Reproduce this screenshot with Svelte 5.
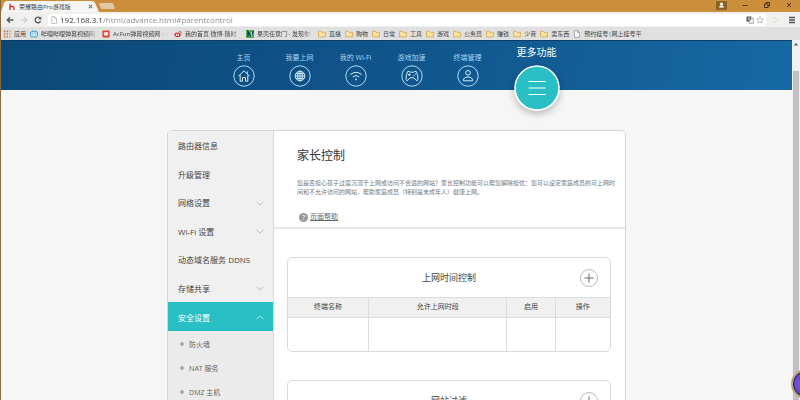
<script>
let address = $state("192.168.3.1/html/advance.html#parentcontrol");
let current = $state("安全设置");

const sites = [
    { icon: "bili", label: "哔哩哔哩弹幕视频网" },
    { icon: "acfun", label: "AcFun弹幕视频网 -" },
    { icon: "weibo", label: "我的首页 微博-随时" },
    { icon: "guokr", label: "果壳任意门 - 发现你" },
];

const folders = ["直播", "购物", "日常", "工具", "游戏", "公务员", "赚钱", "少音", "卖东西"];

const tabs = [
    { icon: "home", label: "主页" },
    { icon: "globe", label: "我要上网" },
    { icon: "wifi", label: "我的 Wi-Fi" },
    { icon: "game", label: "游戏加速" },
    { icon: "user", label: "终端管理" },
];

const menu = [
    { label: "路由器信息" },
    { label: "升级管理" },
    { label: "网络设置", more: true },
    { label: "Wi-Fi 设置", more: true },
    { label: "动态域名服务 DDNS" },
    { label: "存储共享", more: true },
    { label: "安全设置", more: true, children: ["防火墙", "NAT 服务", "DMZ 主机"] },
];

const tables = [
    { title: "上网时间控制", columns: ["终端名称", "允许上网时段", "启用", "操作"] },
    { title: "网站过滤", columns: ["终端名称", "禁止访问网站", "启用", "操作"] },
];
</script>

<div class="browser">
    <header class="titlebar">
        <div class="tab">
            <svg class="tab__shape" viewBox="0 0 100 11" preserveAspectRatio="none" aria-hidden="true">
                <path d="M0 11 L3 2 Q4 0 6 0 H92 Q94 0 95 2 L99 11 Z" fill="#f6f5f3" />
            </svg>
            <svg class="tab__logo" viewBox="0 0 8 8" aria-hidden="true">
                <path d="M2 .8V7M2 4.5Q2 3.4 4 3.4T6 4.5V7" fill="none" stroke="#d2232a" stroke-width="1.3" />
            </svg>
            <span class="tab__title">荣耀路由Pro游戏版</span>
            <button class="plain" aria-label="关闭标签页">
                <svg viewBox="0 0 6 6" class="tab__close"><path d="M1.5 1.5l3 3M4.5 1.5l-3 3" stroke="#666" stroke-width=".9" /></svg>
            </button>
        </div>
        <button class="newtab" aria-label="新标签页"></button>
        <div class="controls">
            <button class="plain profile" aria-label="用户">
                <svg viewBox="0 0 11 9"><circle cx="5.5" cy="3" r="1.5" fill="#fff" /><path d="M3 6.5Q3 4.6 5.5 4.6T8 6.5Z" fill="#fff" /></svg>
            </button>
            <button class="plain" aria-label="最小化">
                <svg viewBox="0 0 8 8"><path d="M1.5 4.5h5" stroke="#54370d" /></svg>
            </button>
            <button class="plain" aria-label="还原">
                <svg viewBox="0 0 8 8"><path d="M3 3V1.5h3.5V5H5M1.5 3H5v3.5H1.5Z" fill="none" stroke="#4a2f0a" /></svg>
            </button>
            <button class="plain" aria-label="关闭">
                <svg viewBox="0 0 8 8"><path d="M2 2l4 4M6 2l-4 4" stroke="#54370d" /></svg>
            </button>
        </div>
    </header>

    <div class="toolbar">
        <button class="plain" aria-label="后退">
            <svg viewBox="0 0 8 8"><path d="M7.5 4H1.5M4 1.2L1.2 4 4 6.8" fill="none" stroke="#555" stroke-width="1.3" /></svg>
        </button>
        <button class="plain" aria-label="前进">
            <svg viewBox="0 0 8 8"><path d="M.5 4h6M4 1.2L6.8 4 4 6.8" fill="none" stroke="#ccc" stroke-width="1.2" /></svg>
        </button>
        <button class="plain" aria-label="刷新">
            <svg viewBox="0 0 8 8"><path d="M6.6 5A2.8 2.8 0 1 1 6 2" fill="none" stroke="#555" stroke-width="1.3" /><path d="M7.4.4v3.2H4.2Z" fill="#555" /></svg>
        </button>
        <div class="address">
            <svg viewBox="0 0 8 8" aria-hidden="true"><path d="M1.8.6h3l1.7 1.7v5.1H1.8ZM4.8.6v1.7h1.7" fill="none" stroke="#aaa" stroke-width=".7" /></svg>
            <input type="text" aria-label="地址" bind:value={address}>
            <button class="plain" aria-label="翻译">
                <svg viewBox="0 0 8 8"><rect x=".5" y=".5" width="4.8" height="5.2" fill="#555" /><path d="M1.6 2h2.6M2.9 1.2V2M2 4.6Q3.6 3.7 3.8 2M2 2.8L4 4.6" fill="none" stroke="#fff" stroke-width=".5" /><path d="M5.6 2.2h2v5.2H3.2V6" fill="#eee" stroke="#888" stroke-width=".6" /></svg>
            </button>
            <button class="plain" aria-label="收藏">
                <svg viewBox="0 0 8 8"><path d="M4 .6l1 2.3 2.5.2-1.9 1.6.6 2.5L4 5.9 1.8 7.2l.6-2.5L.5 3.1 3 2.9Z" fill="none" stroke="#999" stroke-width=".6" /></svg>
            </button>
        </div>
        <button class="plain" aria-label="扩展">
            <svg viewBox="0 0 8 8"><path d="M2 1l4 3-4 3Z" fill="none" stroke="#ddd" stroke-width=".8" /></svg>
        </button>
        <button class="plain menu-button" aria-label="菜单">
            <svg viewBox="0 0 8 8"><path d="M1 1.5h6M1 4h6M1 6.5h6" stroke="#555" stroke-width="1.3" /></svg>
        </button>
    </div>

    <nav class="bookmarks" aria-label="书签">
        <a href="#apps">
            <svg viewBox="0 0 8 8" aria-hidden="true">
                <path d="M1.6 .6v6.8" stroke="#d9604f" stroke-width="1.4" stroke-dasharray="1.6 1" />
                <path d="M4.2 .6v6.8" stroke="#6aa66a" stroke-width="1.4" stroke-dasharray="1.6 1" />
                <path d="M6.8 .6v6.8" stroke="#d9a24f" stroke-width="1.4" stroke-dasharray="1.6 1" />
            </svg>
            <span>应用</span>
        </a>
        {#each sites as site}
            <a href="#{site.icon}" class="site">
                <svg viewBox="0 0 8 8" aria-hidden="true">
                    {#if site.icon === "bili"}
                        <path d="M2 .3l1.4 1.3M6 .3L4.6 1.6" stroke="#3a9fd6" stroke-width=".8" />
                        <rect x=".6" y="1.7" width="6.8" height="5.2" rx="1" fill="#cfeaf8" stroke="#3a9fd6" />
                        <path d="M2.6 3.4v1.2M5.4 3.4v1.2" stroke="#3a9fd6" stroke-width=".8" />
                    {:else if site.icon === "acfun"}
                        <rect x=".4" y=".4" width="7.2" height="7.2" rx=".8" fill="#d8452c" />
                        <path d="M2.2 2.4h3.6v2.8H2.2ZM4 5.2v1" fill="#fff" stroke="#fbe2dc" stroke-width=".5" />
                    {:else if site.icon === "weibo"}
                        <ellipse cx="3.6" cy="4.8" rx="3.2" ry="2.4" fill="#d8302f" />
                        <ellipse cx="3.4" cy="4.9" rx="1.7" ry="1.2" fill="#fff" />
                        <circle cx="3.3" cy="4.9" r=".7" fill="#722" />
                        <path d="M5.2 1.3Q7.4 1 7.3 3.4" fill="none" stroke="#e0452b" stroke-width=".9" />
                    {:else}
                        <rect width="8" height="8" fill="#4fae4c" />
                        <path d="M2 7V1.5L5 6.5 7.5 .8" fill="none" stroke="#0d3b66" stroke-width="1.3" />
                        <path d="M5.5 2v5" stroke="#fff" stroke-width=".7" />
                    {/if}
                </svg>
                <span>{site.label}</span>
            </a>
        {/each}
        {#each folders as folder}
            <a href="#folder">
                <svg viewBox="0 0 8 8" aria-hidden="true"><path d="M.6 6.9V1.3h2.6l.8 1h3.4v4.6Z" fill="#fbe3a4" stroke="#d9a441" stroke-width=".8" /></svg>
                <span>{folder}</span>
            </a>
        {/each}
        <a href="#booking">
            <svg viewBox="0 0 8 8" aria-hidden="true"><path d="M1.6.6h3l1.8 1.8v5H1.6ZM4.6.6v1.8h1.8" fill="#fff" stroke="#888" stroke-width=".7" /></svg>
            <span>预约挂号|网上挂号平</span>
        </a>
    </nav>

    <div class="viewport">
        <div class="page">
            <nav class="topnav" aria-label="主导航">
                {#each tabs as tab}
                    <a href="#{tab.icon}" class="topnav__item">
                        <span>{tab.label}</span>
                        <svg viewBox="0 0 22 22" aria-hidden="true">
                            <circle cx="11" cy="11" r="10.2" class="ring" />
                            {#if tab.icon === "home"}
                                <path d="M5.4 11.2L11 5.8l5.6 5.4M7.2 10.2v6h2.3v-3.6h3v3.6h2.3v-6M14.4 8.6V6.4" />
                            {:else if tab.icon === "globe"}
                                <circle cx="11" cy="11" r="4.8" />
                                <ellipse cx="11" cy="11" rx="2.3" ry="4.8" />
                                <path d="M6.2 11h9.6M11 6.2v9.6M7 8.6h8M7 13.4h8" />
                            {:else if tab.icon === "wifi"}
                                <path d="M5.4 9.6Q11 5 16.6 9.6M7.8 11.9Q11 9.2 14.2 11.9" />
                                <circle cx="11" cy="14.4" r=".9" class="solid" />
                            {:else if tab.icon === "game"}
                                <path d="M6.6 6.6Q8.2 6 9.2 7.2h3.6Q13.8 6 15.4 6.6 17 10 17 14.4q-.4 1.8-2 .8L13 12.8H9L7 15.2q-1.6 1-2-.8Q5 10 6.6 6.6Z" />
                                <path d="M7 9.7h2.6M8.3 8.4V11" />
                                <circle cx="13" cy="10.4" r=".6" class="solid" />
                                <circle cx="14.5" cy="9" r=".6" class="solid" />
                            {:else}
                                <circle cx="11" cy="7.8" r="2.3" />
                                <path d="M6.4 15.8Q6.4 12 11 12t4.6 3.8Z" />
                            {/if}
                        </svg>
                    </a>
                {/each}
                <a href="#more" class="topnav__item topnav__item--active">
                    <span>更多功能</span>
                    <svg viewBox="0 0 46 46" aria-hidden="true">
                        <circle cx="23" cy="23" r="22" fill="#2abfc4" stroke="#fff" stroke-width="1.6" />
                        <path d="M14.5 16.5h17M14.5 23h17M14.5 29.5h17" stroke="#fff" stroke-width="1.2" />
                    </svg>
                </a>
            </nav>

            <div class="card">
                <nav class="sidebar" aria-label="更多功能">
                    <ul>
                        {#each menu as item}
                            <li>
                                <button class="sidebar__item" class:active={current === item.label} onclick={() => (current = item.label)}>
                                    {item.label}
                                    {#if item.more}
                                        <svg viewBox="0 0 8 5" aria-hidden="true"><path d="M.6 .8L4 4.2 7.4 .8" /></svg>
                                    {/if}
                                </button>
                                {#if item.children && current === item.label}
                                    <ul class="submenu">
                                        {#each item.children as child}
                                            <li><a href="#sub">{child}</a></li>
                                        {/each}
                                    </ul>
                                {/if}
                            </li>
                        {/each}
                    </ul>
                </nav>

                <main>
                    <section class="intro">
                        <h1>家长控制</h1>
                        <p>您是否担心孩子过度沉溺于上网或访问不合适的网站？家长控制功能可以帮您解除担忧：您可以设定家庭成员的可上网时间和不允许访问的网站，帮助家庭成员（特别是未成年人）健康上网。</p>
                        <a href="#help" class="help"><i>?</i><span>页面帮助</span></a>
                    </section>

                    {#each tables as table}
                        <section class="box">
                            <header>
                                <h2>{table.title}</h2>
                                <button class="add" aria-label="添加{table.title}">
                                    <svg viewBox="0 0 18 18"><circle cx="9" cy="9" r="8.5" stroke="#bbb" /><path d="M9 4.5v9M4.5 9h9" stroke="#666" /></svg>
                                </button>
                            </header>
                            <table>
                                <thead>
                                    <tr>
                                        {#each table.columns as column}
                                            <th>{column}</th>
                                        {/each}
                                    </tr>
                                </thead>
                                <tbody>
                                    <tr>
                                        {#each table.columns as column}
                                            <td></td>
                                        {/each}
                                    </tr>
                                </tbody>
                            </table>
                        </section>
                    {/each}
                </main>
            </div>
        </div>

        <div class="scrollbar">
            <svg viewBox="0 0 8 8" aria-hidden="true"><path d="M2 5.5h4L4 3Z" fill="#505050" /></svg>
            <div class="thumb"></div>
        </div>
    </div>

    <div class="orb"></div>
</div>

<style>
:global(body) {
    margin: 0;
    font-family: "Open Sans", "Noto Sans CJK SC", sans-serif;
    color: #444;
}

* {
    box-sizing: border-box;
}

a {
    color: inherit;
    text-decoration: none;
}

svg {
    display: block;
    flex: none;
}

ul {
    list-style: none;
    margin: 0;
    padding: 0;
}

.plain {
    border: none;
    background: none;
    padding: 0;
    cursor: pointer;
}

.browser {
    position: relative;
    display: flex;
    flex-direction: column;
    height: 100vh;
    overflow: hidden;
    background: #f6f6f6;
    border-left: 1px solid #8a6a3c;
}

/* window frame */

.titlebar {
    display: flex;
    align-items: flex-end;
    height: 12px;
    background: #cb8e3a;
}

.tab {
    position: relative;
    display: flex;
    align-items: center;
    width: 99px;
    height: 11px;
    padding: 0 6px 0 7px;
    font-size: 6px;
    line-height: 10px;
}

.tab__shape {
    position: absolute;
    inset: 0;
    width: 100%;
    height: 100%;
}

.tab__logo {
    position: relative;
    width: 8px;
    height: 8px;
    margin-right: 3px;
}

.tab__title {
    position: relative;
    flex: 1;
    white-space: nowrap;
}

.tab__close {
    position: relative;
    width: 7px;
    height: 7px;
}

.newtab {
    width: 14px;
    height: 6px;
    margin-bottom: 3px;
    padding: 0;
    border: none;
    border-radius: 1px;
    background: #dfc8a6;
    transform: skewX(20deg);
}

.controls {
    display: flex;
    align-items: center;
    align-self: flex-start;
    gap: 14px;
    margin-left: auto;
    padding-right: 7px;
}

.controls svg {
    width: 8px;
    height: 10px;
}

.controls .profile svg {
    width: 11px;
    height: 9px;
    background: #8a6227;
}

.toolbar {
    display: flex;
    align-items: center;
    gap: 6px;
    height: 15px;
    padding: 0 4px 0 5px;
    background: #f0f0ef;
}

.toolbar svg {
    width: 8px;
    height: 8px;
}

.menu-button {
    margin-left: 2px;
}

.address {
    display: flex;
    flex: 1;
    align-items: center;
    gap: 2px;
    height: 12px;
    padding: 0 2px;
    background: #fff;
    border-radius: 1px;
}

.address input {
    flex: 1;
    min-width: 0;
    height: 12px;
    padding: 0;
    border: none;
    outline: none;
    font: 8px/12px "Open Sans", sans-serif;
    /* host stays dark, the path is dimmed */
    color: transparent;
    background: linear-gradient(to right, #333 43px, #888 43px);
    background-clip: text;
    -webkit-background-clip: text;
}

.bookmarks {
    display: flex;
    align-items: center;
    gap: 4px;
    height: 13px;
    padding-left: 2px;
    background: #e0e0e0;
    font-size: 6px;
    line-height: 12px;
    white-space: nowrap;
}

.bookmarks a {
    display: flex;
    flex: none;
    align-items: center;
    gap: 3px;
}

.bookmarks svg {
    width: 8px;
    height: 8px;
}

.site span {
    width: 57px;
    mask-image: linear-gradient(to right, #000 80%, transparent);
}

/* router page */

.viewport {
    display: flex;
    flex: 1;
    min-height: 0;
}

.page {
    flex: 1;
    min-width: 0;
    overflow: hidden;
}

.topnav {
    display: flex;
    justify-content: center;
    height: 50px;
    background: linear-gradient(100deg, #0c4876 0%, #0f5389 45%, #1669a4 100%);
    border-top: 1px solid #0b3d66;
    color: #a9d3f0;
}

.topnav__item {
    display: flex;
    flex-direction: column;
    align-items: center;
    width: 56px;
    padding-top: 12px;
    font-size: 7px;
    line-height: 10px;
}

.topnav__item svg {
    width: 22px;
    height: 22px;
    margin-top: 2px;
    fill: none;
    stroke: #d4eefc;
    stroke-width: 1;
}

.topnav__item .ring {
    stroke: #a9dcf8;
}

.topnav__item .solid {
    fill: #d4eefc;
    stroke: none;
}

.topnav__item--active {
    width: 82px;
    padding-top: 4px;
    color: #fff;
    font-size: 10px;
    line-height: 14px;
}

.topnav__item--active svg {
    width: 46px;
    height: 46px;
    margin-top: 6px;
    border-radius: 50%;
    box-shadow: 0 3px 7px rgba(0, 0, 0, 0.25);
}

.card {
    display: flex;
    width: 58%;
    margin: 40px auto 0;
    background: #fff;
    border: 1px solid #d6d6d6;
    border-radius: 5px;
    overflow: hidden;
}

.sidebar {
    flex: none;
    width: 23%;
    min-width: 106px;
    background: #f0f0f0;
    border-right: 1px solid #d8d8d8;
}

.sidebar__item {
    display: flex;
    align-items: center;
    justify-content: space-between;
    width: 100%;
    height: 28px;
    padding: 2px 9px 0 10px;
    border: none;
    background: none;
    color: #444;
    font: inherit;
    font-size: 8px;
    line-height: 12px;
    text-align: left;
    white-space: nowrap;
    cursor: pointer;
}

li:nth-child(even) > .sidebar__item {
    height: 29px;
}

.sidebar__item svg {
    width: 8px;
    height: 5px;
    fill: none;
    stroke: #bbb;
}

.sidebar .sidebar__item.active {
    height: 29px;
    background: #2abfc4;
    color: #fff;
}

.active svg {
    stroke: #a5e6e8;
    transform: rotate(180deg);
}

.submenu {
    padding: 1px 0 60px;
    background: #ebebeb;
}

.submenu a {
    display: flex;
    align-items: center;
    gap: 5px;
    height: 24px;
    padding-left: 12px;
    color: #666;
    font-size: 7px;
}

.submenu a::before {
    content: "";
    width: 4px;
    height: 4px;
    border-radius: 50%;
    background: #aaa;
}

main {
    flex: 1;
    min-width: 0;
}

.intro {
    padding: 16px 8px 2px 23px;
    border-bottom: 2px solid #e6e6e6;
}

h1 {
    margin: 0;
    font-size: 12px;
    font-weight: 400;
    line-height: 18px;
    color: #333;
}

.intro p {
    margin: 14px 0 0;
    font-size: 6px;
    line-height: 9px;
    color: #777;
}

.help {
    display: inline-flex;
    align-items: center;
    gap: 2px;
    margin: 15px 0 0 2px;
    font-size: 7px;
    line-height: 10px;
    color: #666;
}

.help i {
    width: 9px;
    height: 9px;
    border-radius: 50%;
    background: #999;
    color: #fff;
    font-size: 7px;
    font-style: normal;
    line-height: 9px;
    text-align: center;
}

.help span {
    text-decoration: underline;
}

.box {
    margin: 28px 14px 0 13px;
    border: 1px solid #d9d9d9;
    border-radius: 5px;
    overflow: hidden;
}

.box header {
    display: grid;
    grid-template-columns: 18px 1fr 18px;
    align-items: center;
    height: 39px;
    padding: 1px 12px 0;
}

h2 {
    grid-column: 2;
    margin: 0;
    font-size: 9px;
    font-weight: 400;
    line-height: 14px;
    text-align: center;
}

.add {
    padding: 0;
    border: none;
    background: none;
    cursor: pointer;
}

.add svg {
    width: 18px;
    height: 18px;
    fill: none;
}

table {
    width: 100%;
    table-layout: fixed;
    border-collapse: collapse;
}

th {
    height: 20px;
    padding: 0;
    background: #f0f0f0;
    border: 1px solid #dcdcdc;
    font-size: 7px;
    font-weight: 400;
    line-height: 10px;
}

td {
    height: 34px;
    padding: 0;
    border: 1px solid #dcdcdc;
    border-bottom: none;
}

th:first-child,
td:first-child {
    width: 25%;
    border-left: none;
}

th:nth-child(3) {
    width: 15%;
}

th:last-child,
td:last-child {
    width: 17%;
    border-right: none;
}

.scrollbar {
    display: flex;
    flex: none;
    flex-direction: column;
    width: 8px;
    background: #f1f1f1;
}

.scrollbar svg {
    width: 8px;
    height: 8px;
}

.thumb {
    flex: 1;
    margin: 23px 1px 0;
    background: #c1c1c1;
}

.orb {
    position: absolute;
    right: -21px;
    bottom: 1px;
    width: 30px;
    height: 30px;
    border: 2px solid #b5a878;
    border-radius: 50%;
    background: radial-gradient(circle at 35% 50%, #7d5be0, #5a3cc4 60%, #2c1b6b);
    box-shadow: inset 0 0 0 1px #2b2140;
}
</style>
